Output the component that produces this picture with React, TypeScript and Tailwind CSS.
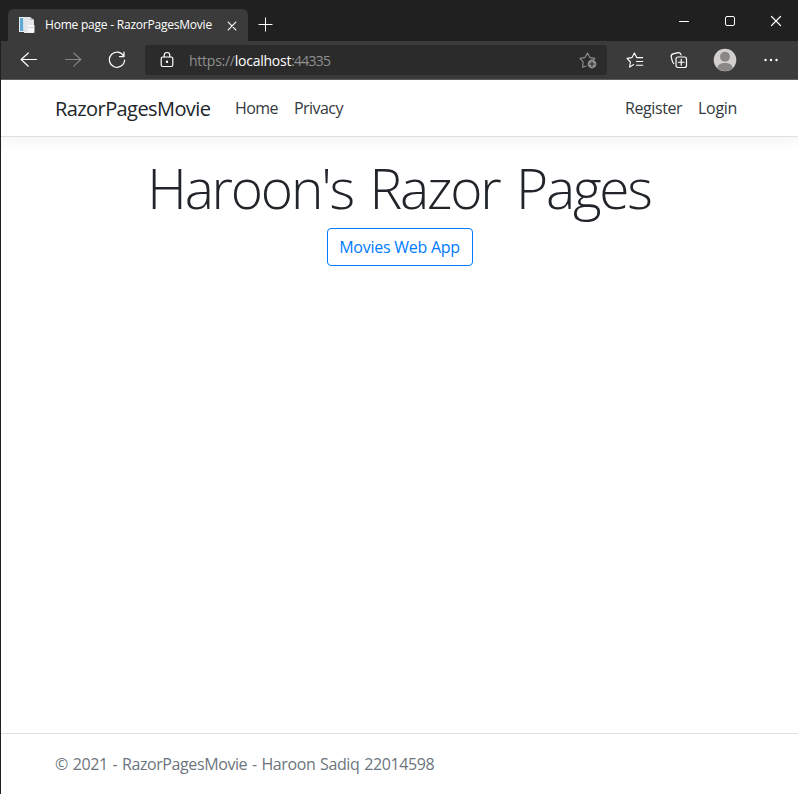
import React from "react";

const stroke = {
  fill: "none",
  stroke: "currentColor",
  strokeLinecap: "round" as const,
  strokeLinejoin: "round" as const,
};

function Favicon() {
  return (
    <svg width="18" height="18" viewBox="0 0 18 18">
      <path d="M1 1h10v15H1z" fill="#e4eef4" />
      <path d="M2 2h3.3v13H2z" fill="#5fa9d2" />
      <path d="M5.3 1H12l4 3v13H6z" fill="#e3e6e9" />
      <path d="M12 1l4 3h-4z" fill="#b9c1c8" />
      <path d="M9.5 9h7v7.5h-7z" fill="#f6f7f8" />
      <path d="M10 11.5h5.5" stroke="#cfd5da" />
    </svg>
  );
}

function TabStrip() {
  return (
    <div className="flex h-[41px] bg-[#202020] pl-[7px] text-white">
      <div className="mt-[9px] flex h-8 w-[240px] items-center rounded-t-[6px] bg-[#3b3b3b] pl-[10px]">
        <Favicon />
        <span className="ml-[9px] w-[168px] whitespace-nowrap text-[12px] tracking-[-0.22px]">
          Home page - RazorPagesMovie
        </span>
        <svg className="ml-[14px] mt-px" width="10" height="10" viewBox="0 0 10 10" {...stroke} strokeWidth="1.2">
          <path d="M1.2 1.2l7.6 7.6M8.8 1.2l-7.6 7.6" />
        </svg>
      </div>
      <svg className="ml-[10px] mt-[17px]" width="15" height="15" viewBox="0 0 15 15" {...stroke} strokeLinecap="butt">
        <path d="M7.5 0.5v14M0.5 7.5h14" />
      </svg>
      <div className="ml-auto flex items-start pr-[16px] pt-[15px]">
        <svg width="12" height="12" viewBox="0 0 12 12" {...stroke}>
          <path d="M1.5 6.5h9" />
        </svg>
        <svg className="ml-[34px]" width="12" height="12" viewBox="0 0 12 12" {...stroke}>
          <rect x="1.5" y="1.5" width="9" height="9" rx="1.5" />
        </svg>
        <svg className="ml-[34px]" width="12" height="12" viewBox="0 0 12 12" {...stroke} strokeWidth="1.2">
          <path d="M1.5 1.5l9 9M10.5 1.5l-9 9" />
        </svg>
      </div>
    </div>
  );
}

function Toolbar() {
  return (
    <div className="flex h-[39px] items-center border-b border-[#5f5f5f] bg-[#3b3b3b] pl-[19px] text-white">
      <svg width="18" height="18" viewBox="0 0 18 18" {...stroke} strokeWidth="1.2">
        <path d="M16.5 8.5H1M8.3 2L1.2 8.5l7.1 6.7" />
      </svg>
      <svg className="ml-[26px] text-[#858585]" width="18" height="18" viewBox="0 0 18 18" {...stroke} strokeWidth="1.1">
        <path d="M1.5 8.5H17M9.7 2l7.1 6.5-7.1 6.7" />
      </svg>
      <svg className="ml-[26px]" width="18" height="18" viewBox="0 0 18 18" {...stroke} strokeWidth="1.2">
        <path d="M15.8 5.3A7.6 7.6 0 1 0 16.6 9M16 1v4.6h-4.5" />
      </svg>
      <div className="ml-[19px] flex h-[30px] w-[462px] items-center rounded-[3px] bg-[#2b2b2b] pl-[15px]">
        <svg width="14" height="18" viewBox="0 0 14 18" {...stroke} strokeWidth="1.2">
          <rect x="1.2" y="6" width="11.6" height="9.5" rx="1.5" />
          <path d="M4.2 6V4.3a2.8 2.8 0 0 1 5.6 0V6" />
          <circle cx="7" cy="10.8" r="0.6" fill="currentColor" />
        </svg>
        <span className="ml-[15px] whitespace-nowrap text-[14px] tracking-[-0.25px] text-[#8f8f8f]">
          https://<span className="text-white">localhost</span>
          <span className="tracking-[-0.75px]">:44335</span>
        </span>
        <svg className="ml-auto mr-[10px] text-[#8f8f8f]" width="18" height="18" viewBox="0 0 18 18" {...stroke} strokeWidth="1.1">
          <path d="M7 15.1l-3.4 1.2.6-5.1L.9 7.4l5-.8L8.5 1.9l2.4 4.7 5 .8-1.6 1.5" />
          <circle cx="13" cy="13" r="4.4" fill="currentColor" stroke="none" />
          <path d="M13 10.8v4.4M10.8 13h4.4" stroke="#2b2b2b" />
        </svg>
      </div>
      <svg className="ml-[19px]" width="18" height="18" viewBox="0 0 18 18" {...stroke} strokeWidth="1.1">
        <path d="M7.7 13.5l-4.1 2.6.8-5.1L1 7.4l5-.8 2.4-4.7 2.3 4.7h6M10.5 10.5h6.2M10.5 14.3h6.2" />
      </svg>
      <svg className="ml-[26px]" width="18" height="18" viewBox="0 0 18 18" {...stroke} strokeWidth="1.2">
        <path d="M3.7 12.5C2 11.5 2.2 9.5 1.3 6.2.8 4 1.2 3.5 3 2.9l5.3-1.3c1.8-.3 2.3.3 2.8 2.3" />
        <rect x="6" y="6" width="10.5" height="10.5" rx="2" />
        <path d="M11.25 8.3v5.9M8.3 11.25h5.9" />
      </svg>
      <svg className="ml-[25px]" width="24" height="24" viewBox="0 0 24 24">
        <circle cx="12" cy="12" r="11.3" fill="#d2d0ce" />
        <circle cx="12" cy="8.7" r="5" fill="#8a8886" />
        <path d="M4.4 20.3C4.6 16.7 7.5 15 12 15s7.4 1.7 7.6 5.3a11.3 11.3 0 0 1-15.2 0z" fill="#8a8886" />
      </svg>
      <svg className="ml-[26px]" width="16" height="16" viewBox="0 0 16 16" fill="white">
        <circle cx="2.5" cy="8" r="1.2" />
        <circle cx="8" cy="8" r="1.2" />
        <circle cx="13.5" cy="8" r="1.2" />
      </svg>
    </div>
  );
}

function SiteHeader() {
  return (
    <header className="flex h-[57px] items-center border-b border-[#dee2e6] px-[54px] text-[16px] text-[#343a40] shadow-[0_4px_12px_rgba(0,0,0,0.05)]">
      <a className="w-[156px] whitespace-nowrap pt-[2px] text-[20px] tracking-[-0.58px] text-[#212529]">RazorPagesMovie</a>
      <nav className="ml-6 flex flex-1 gap-4 whitespace-nowrap">
        <a className="w-[43px] tracking-[-0.6px]">Home</a>
        <a className="tracking-[-0.55px]">Privacy</a>
      </nav>
      <nav className="flex gap-4 whitespace-nowrap pr-[6px]">
        <a className="w-[57px] tracking-[-0.4px]">Register</a>
        <a className="w-[40px] tracking-[-0.3px]">Login</a>
      </nav>
    </header>
  );
}

export default function App() {
  return (
    <div className="flex h-[794px] w-[798px] flex-col overflow-hidden border-l border-[#202020] bg-white font-['Open_Sans','Noto_Sans',sans-serif]">
      <TabStrip />
      <Toolbar />
      <SiteHeader />
      <main className="flex flex-1 flex-col items-center pt-[18px]">
        <h1 className="mr-px whitespace-nowrap text-[55px] font-light leading-[66px] tracking-[-2.2px] text-[#212529] [word-spacing:4.5px]">
          Haroon's Razor Pages
        </h1>
        <a className="mt-[7px] flex h-[38px] w-[146px] items-center justify-center whitespace-nowrap rounded-[4px] border border-[#007bff] text-[16px] tracking-[-0.25px] text-[#007bff]">
          Movies Web App
        </a>
      </main>
      <footer className="flex h-[61px] items-center border-t border-[#dee2e6] px-[54px] text-[16px] tracking-[-0.4px] text-[#6c757d] [word-spacing:1px]">
        <span className="whitespace-nowrap">&copy; 2021 - RazorPagesMovie - Haroon Sadiq 22014598</span>
      </footer>
    </div>
  );
}
